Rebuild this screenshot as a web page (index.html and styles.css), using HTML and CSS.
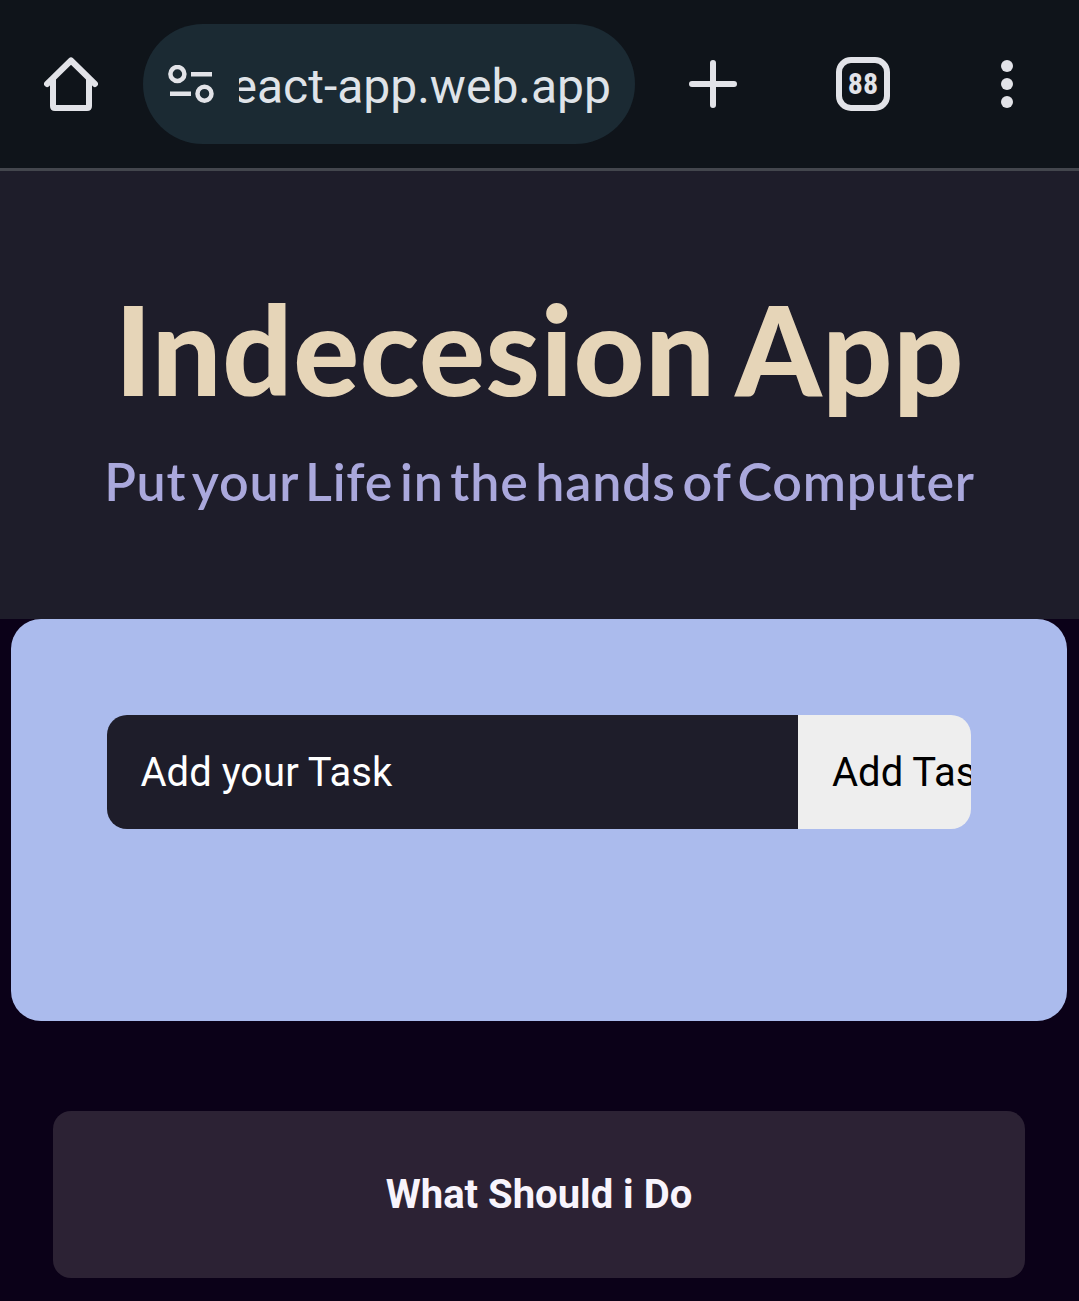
FILE: index.html
```html
<!DOCTYPE html>
<html lang="en">
<head>
<meta charset="utf-8">
<title>Indecesion App</title>
<link rel="stylesheet" href="styles.css">
</head>
<body>
<nav class="toolbar">
  <svg class="home" viewBox="0 0 54 54" width="54" height="54"><path d="M3 27 27 3.500 51 27M9 22V49Q9 51 11 51H43Q45 51 45 49V22"/></svg>
  <div class="address">
    <svg class="tune" viewBox="0 0 46 38" width="46" height="38"><circle cx="9.400" cy="9" r="7"/><path d="M23 9.200H44M2 28.700H23"/><circle cx="36.500" cy="28.700" r="7"/></svg>
    <div class="url"><span>react-app.web.app</span></div>
  </div>
  <svg class="plus" viewBox="0 0 48 48" width="48" height="48"><path d="M3 24H45M24 3V45"/></svg>
  <div class="tabs">88</div>
  <svg class="menu" viewBox="0 0 12 48" width="12" height="48"><circle cx="6" cy="6" r="6"/><circle cx="6" cy="24" r="6"/><circle cx="6" cy="42" r="6"/></svg>
</nav>
<header class="header">
  <h1 class="title">Indecesion App</h1>
  <h2 class="subtitle">Put your Life in the hands of Computer</h2>
</header>
<main>
  <section class="panel">
    <form class="add-task">
      <div class="field">Add your Task</div>
      <button class="submit" type="button">Add Task</button>
    </form>
  </section>
  <button class="decide" type="button">What Should i Do</button>
</main>
</body>
</html>
```
FILE: styles.css
```css
* { box-sizing: border-box; }
body { margin: 0; height: 1301px; overflow: hidden; background: #0b0118; font-family: Roboto, sans-serif; }
button { border: 0; font-family: inherit; }
svg { display: block; flex: none; }
.toolbar { display: flex; align-items: center; height: 171px; padding: 0 66px 0 44px; background: #0f141a; border-bottom: 3px solid #43464d; }
.home, .plus { fill: none; stroke: #e2e3e8; stroke-width: 6; stroke-linecap: round; stroke-linejoin: round; }
.address { display: flex; align-items: center; width: 492px; height: 120px; margin-left: 45px; padding: 0 24px 0 25px; border-radius: 60px; background: #1b2a33; }
.tune { fill: none; stroke: #e2e3e8; stroke-width: 4.5; }
.url { display: flex; justify-content: flex-end; flex: 1; margin-left: 25px; overflow: hidden; color: #dfe3e8; font-size: 48px; line-height: 60px; white-space: nowrap; padding-top: 5px; }
.plus { margin-left: 54px; }
.tabs { width: 54px; height: 54px; margin-left: 99px; border: 6px solid #e2e3e8; border-radius: 15px; color: #e2e3e8; font: 700 30px/42px "Roboto Condensed", Roboto, sans-serif; text-align: center; }
.menu { margin-left: 111px; fill: #e2e3e8; }
.header { height: 448px; padding-top: 104px; background: #1e1d2a; font-family: Lato, sans-serif; text-align: center; white-space: nowrap; }
.title { margin: 0; color: #e6d5b8; font-size: 123px; font-weight: 900; line-height: 148px; letter-spacing: 0.7px; word-spacing: -6px; }
.subtitle { margin: 27px 0 0; color: #aaa8dc; font-size: 52px; font-weight: 600; line-height: 62px; letter-spacing: 0.8px; word-spacing: -7px; }
.panel { height: 402px; margin: 0 12px 0 11px; padding: 96px; border-radius: 30px; background: #abbbed; }
.add-task { display: flex; height: 114px; margin: 0; border-radius: 20px; overflow: hidden; font-size: 40px; line-height: 116px; white-space: nowrap; }
.field { flex: 0 0 691px; padding-left: 33.500px; background: #1e1d2a; color: #fff; }
.submit { flex: none; padding: 0 34px; background: #eee; color: #000; font-size: 40px; }
.decide { display: block; width: 972px; height: 167px; margin: 90px 0 0 53px; border-radius: 18px; background: #2c2234; color: #f8f4fc; font-size: 40px; font-weight: 700; }
```
